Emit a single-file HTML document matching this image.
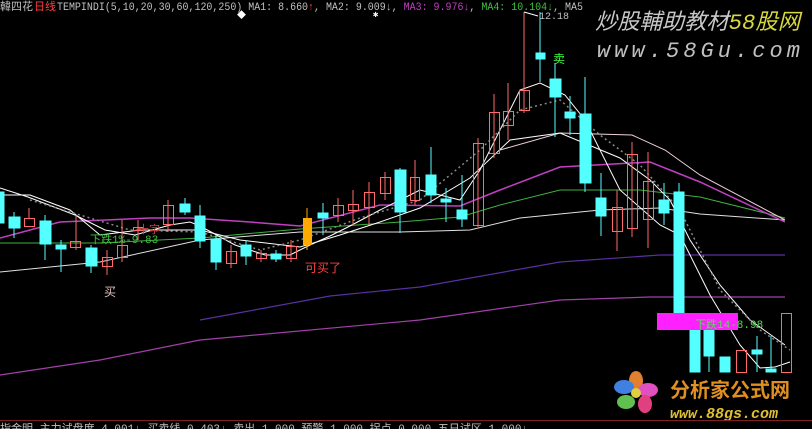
<!DOCTYPE html>
<html><head><meta charset="utf-8"><style>
html,body{margin:0;padding:0;background:#000;width:812px;height:429px;overflow:hidden}
svg{display:block}
text{font-family:"Liberation Mono","Noto Sans CJK SC",monospace}
</style></head><body>
<svg width="812" height="429" viewBox="0 0 812 429" xmlns="http://www.w3.org/2000/svg">
<rect width="812" height="429" fill="#000"/>
<!-- header -->
<text x="0" y="10" font-size="11" fill="#c0c0c0">韓四花</text>
<text x="34" y="10" font-size="11" fill="#ff4040">日线</text>
<text x="57" y="10" font-size="11" fill="#c0c0c0" textLength="526" lengthAdjust="spacingAndGlyphs">TEMPINDI(5,10,20,30,60,120,250) MA1: 8.660<tspan fill="#ff4040">↑</tspan>, MA2: 9.009↓, <tspan fill="#c040c0">MA3: 9.976↓</tspan>, <tspan fill="#40c040">MA4: 10.104↓</tspan>, MA5</text>
<text x="237" y="18" font-size="9" fill="#fff">◆</text>
<text x="373" y="17" font-size="9" fill="#fff">✱</text>
<!-- watermark -->
<text x="595" y="29" font-size="22" font-style="italic" fill="#c8c8c8" font-family="'Noto Sans CJK SC',sans-serif" textLength="205" lengthAdjust="spacingAndGlyphs">炒股輔助教材<tspan fill="#d8d840">58股网</tspan></text>
<text x="597" y="57" font-size="22" font-style="italic" fill="#c0c0c0" textLength="203" lengthAdjust="spacing">www.58Gu.com</text>
<!-- MA lines -->
<polyline fill="none" stroke="#5a2fa0" stroke-width="1.2" points="200,320 330,296 420,287 560,262 660,255 785,255"/>
<polyline fill="none" stroke="#a040a8" stroke-width="1.2" points="0,375 100,360 200,340 420,320 560,300 650,297 785,297"/>
<polyline fill="none" stroke="#e0e0e0" stroke-width="1" points="0,272 100,262 200,240 300,232 400,232 470,230 520,218 600,210 660,208 700,214 785,220"/>
<polyline fill="none" stroke="#40b040" stroke-width="1" points="0,243 100,243 200,238 300,229 400,222 460,217 500,205 560,190 640,190 700,197 785,218"/>
<polyline fill="none" stroke="#c040c0" stroke-width="1.5" points="0,238 60,222 150,218 190,218 250,222 300,226 380,205 460,206 500,190 560,167 650,162 700,182 785,222"/>
<polyline fill="none" stroke="#f0d0e0" stroke-width="1" points="500,150 560,133 632,135 665,150 700,175 785,220"/>
<polyline fill="none" stroke="#fff" stroke-width="1" points="0,188 28,197 75,215 105,230 135,235 170,225 190,222 200,226 235,245 265,255 290,255 310,245 330,236 350,226 380,210 410,195 420,190 460,200 480,170 520,90 540,83 565,95 585,120 620,190 660,225 680,235 710,295 740,345 760,368 775,367 790,362"/>
<polyline fill="none" stroke="#fff" stroke-width="1" points="0,195 30,195 70,210 100,235 140,230 200,230 240,240 300,247 340,235 380,222 420,208 470,178 510,140 560,133 620,158 650,180 670,200 690,240 720,285 750,320 785,345"/>
<polyline fill="none" stroke="#888" stroke-width="1.5" stroke-dasharray="2,3" points="30,200 80,215 130,230 200,232 260,250 300,240 360,218 420,200 480,150 520,110 560,100 600,135 640,165 680,210 720,290 760,330 790,350"/>
<!-- candles -->
<g stroke-width="1">
<g fill="#54ffff" stroke="#54ffff">
<rect x="0" y="192" width="4" height="31"/>
<line x1="14" y1="212" x2="14" y2="238"/><rect x="9" y="217" width="11" height="11"/>
<line x1="45" y1="215" x2="45" y2="260"/><rect x="40" y="221" width="11" height="23"/>
<line x1="61" y1="240" x2="61" y2="272"/><rect x="56" y="245" width="10" height="4"/>
<line x1="91" y1="245" x2="91" y2="273"/><rect x="86" y="248" width="11" height="18"/>
<line x1="185" y1="198" x2="185" y2="215"/><rect x="180" y="204" width="10" height="8"/>
<line x1="200" y1="205" x2="200" y2="248"/><rect x="195" y="216" width="10" height="25"/>
<line x1="216" y1="235" x2="216" y2="270"/><rect x="211" y="239" width="10" height="23"/>
<line x1="246" y1="240" x2="246" y2="265"/><rect x="241" y="245" width="10" height="11"/>
<line x1="276" y1="250" x2="276" y2="262"/><rect x="271" y="254" width="10" height="5"/>
<line x1="323" y1="203" x2="323" y2="235"/><rect x="318" y="213" width="10" height="5"/>
<line x1="400" y1="168" x2="400" y2="233"/><rect x="395" y="170" width="11" height="42"/>
<line x1="431" y1="147" x2="431" y2="203"/><rect x="426" y="175" width="10" height="20"/>
<line x1="446" y1="188" x2="446" y2="222"/><rect x="441" y="199" width="10" height="3"/>
<line x1="462" y1="175" x2="462" y2="227"/><rect x="457" y="210" width="10" height="9"/>
<line x1="540" y1="12" x2="540" y2="82"/><rect x="536" y="53" width="9" height="6"/>
<line x1="555" y1="64" x2="555" y2="137"/><rect x="550" y="79" width="11" height="18"/>
<line x1="570" y1="96" x2="570" y2="135"/><rect x="565" y="112" width="10" height="6"/>
<line x1="585" y1="77" x2="585" y2="192"/><rect x="580" y="114" width="11" height="69"/>
<line x1="601" y1="173" x2="601" y2="236"/><rect x="596" y="198" width="10" height="18"/>
<line x1="664" y1="183" x2="664" y2="225"/><rect x="659" y="200" width="10" height="13"/>
<line x1="679" y1="183" x2="679" y2="313"/><rect x="674" y="192" width="10" height="121"/>
<rect x="690" y="330" width="10" height="42"/>
<line x1="709" y1="330" x2="709" y2="372"/><rect x="704" y="330" width="10" height="26"/>
<rect x="720" y="357" width="10" height="15"/>
<line x1="757" y1="336" x2="757" y2="372"/><rect x="752" y="350" width="10" height="4"/>
<line x1="771" y1="336" x2="771" y2="372"/><rect x="766" y="369" width="10" height="3"/>
</g>
<g fill="none" stroke="#ff6a6a">
<line x1="29" y1="208" x2="29" y2="218"/><rect x="24.5" y="218.5" width="10" height="8"/>
<line x1="76" y1="215" x2="76" y2="250"/><rect x="70.5" y="241.5" width="10" height="6"/>
<line x1="107" y1="250" x2="107" y2="275"/><rect x="102.5" y="257.5" width="10" height="9"/>
<line x1="122" y1="220" x2="122" y2="262"/><rect x="117.5" y="245.5" width="10" height="12"/>
<line x1="138" y1="220" x2="138" y2="240"/><rect x="133.5" y="227.5" width="10" height="3"/>
<line x1="168" y1="200" x2="168" y2="232"/><rect x="163.5" y="205.5" width="10" height="19"/>
<line x1="231" y1="245" x2="231" y2="268"/><rect x="226.5" y="251.5" width="10" height="12"/>
<line x1="261" y1="250" x2="261" y2="262"/><rect x="256.5" y="253.5" width="10" height="5"/>
<line x1="291" y1="240" x2="291" y2="262"/><rect x="286.5" y="246.5" width="10" height="12"/>
<line x1="338" y1="198" x2="338" y2="222"/><rect x="333.5" y="205.5" width="10" height="10"/>
<line x1="353" y1="190" x2="353" y2="225"/><rect x="348.5" y="204.5" width="10" height="6"/>
<line x1="369" y1="182" x2="369" y2="225"/><rect x="364.5" y="192.5" width="10" height="15"/>
<line x1="385" y1="172" x2="385" y2="200"/><rect x="380.5" y="177.5" width="10" height="16"/>
<line x1="415" y1="160" x2="415" y2="205"/><rect x="410.5" y="177.5" width="9" height="23"/>
<line x1="478" y1="138" x2="478" y2="227"/><rect x="473.5" y="143.5" width="10" height="82"/>
<line x1="494" y1="94" x2="494" y2="158"/><rect x="489.5" y="112.5" width="10" height="41"/>
<line x1="508" y1="83" x2="508" y2="140"/><rect x="503.5" y="111.5" width="10" height="14"/>
<line x1="524" y1="12" x2="524" y2="113"/><rect x="519.5" y="90.5" width="10" height="20"/>
<line x1="617" y1="190" x2="617" y2="251"/><rect x="612.5" y="207.5" width="10" height="24"/>
<line x1="632" y1="142" x2="632" y2="237"/><rect x="627.5" y="154.5" width="10" height="74"/>
<line x1="648" y1="152" x2="648" y2="248"/><rect x="643.5" y="181.5" width="10" height="38"/>
<rect x="736.5" y="350.5" width="10" height="22"/>
<rect x="781.5" y="313.5" width="10" height="59"/>
</g>
<line x1="307" y1="208" x2="307" y2="250" stroke="#ffaa00"/>
<rect x="303" y="218" width="9" height="27" fill="#ffaa00"/>
</g>
<!-- annotations -->
<rect x="657" y="313" width="81" height="17" fill="#ff20ff"/>
<text x="695" y="328" font-size="11" fill="#50e050">下跌14-8.98</text>
<text x="90" y="243" font-size="11" fill="#40c040">下跌1%-9.83</text>
<text x="138" y="233" font-size="11" fill="#d04040">十字</text>
<text x="104" y="296" font-size="12" fill="#e0c0c0" font-family="'Noto Sans CJK SC',sans-serif">买</text>
<text x="305" y="272" font-size="12" fill="#ff4040" font-family="'Noto Sans CJK SC',sans-serif">可买了</text>
<text x="553" y="63" font-size="12" fill="#40ff40" font-family="'Noto Sans CJK SC',sans-serif">卖</text>
<polyline points="524,12 538,16" fill="none" stroke="#fff"/>
<text x="539" y="19" font-size="10" fill="#c0c0c0">12.18</text>
<!-- logo -->
<g>
<ellipse cx="636" cy="381" rx="7" ry="10" fill="#e08030"/>
<ellipse cx="624" cy="387" rx="10" ry="7" fill="#4080e0"/>
<ellipse cx="648" cy="390" rx="10" ry="7" fill="#e050c0"/>
<ellipse cx="626" cy="402" rx="9" ry="7" fill="#60c050"/>
<ellipse cx="645" cy="404" rx="7" ry="9" fill="#e04080"/>
<circle cx="636" cy="393" r="5" fill="#e0d040"/>
</g>
<text x="670" y="397" font-size="20" font-weight="bold" fill="#e09020" font-family="'Noto Sans CJK SC',sans-serif">分析家公式网</text>
<text x="670" y="418" font-size="15" font-weight="bold" font-style="italic" fill="#e0c030" font-family="'Liberation Sans',sans-serif">www.88gs.com</text>
<!-- bottom bar -->
<line x1="0" y1="420.5" x2="812" y2="420.5" stroke="#802020"/>
<text x="0" y="432" font-size="11" fill="#c0c0c0">指金明 主力试盘度 4.001↓ 买卖线 0.403↓ 卖出 1.000 预警 1.000 拐点 0.000 五日试区 1.000↓</text>
</svg>
</body></html>
